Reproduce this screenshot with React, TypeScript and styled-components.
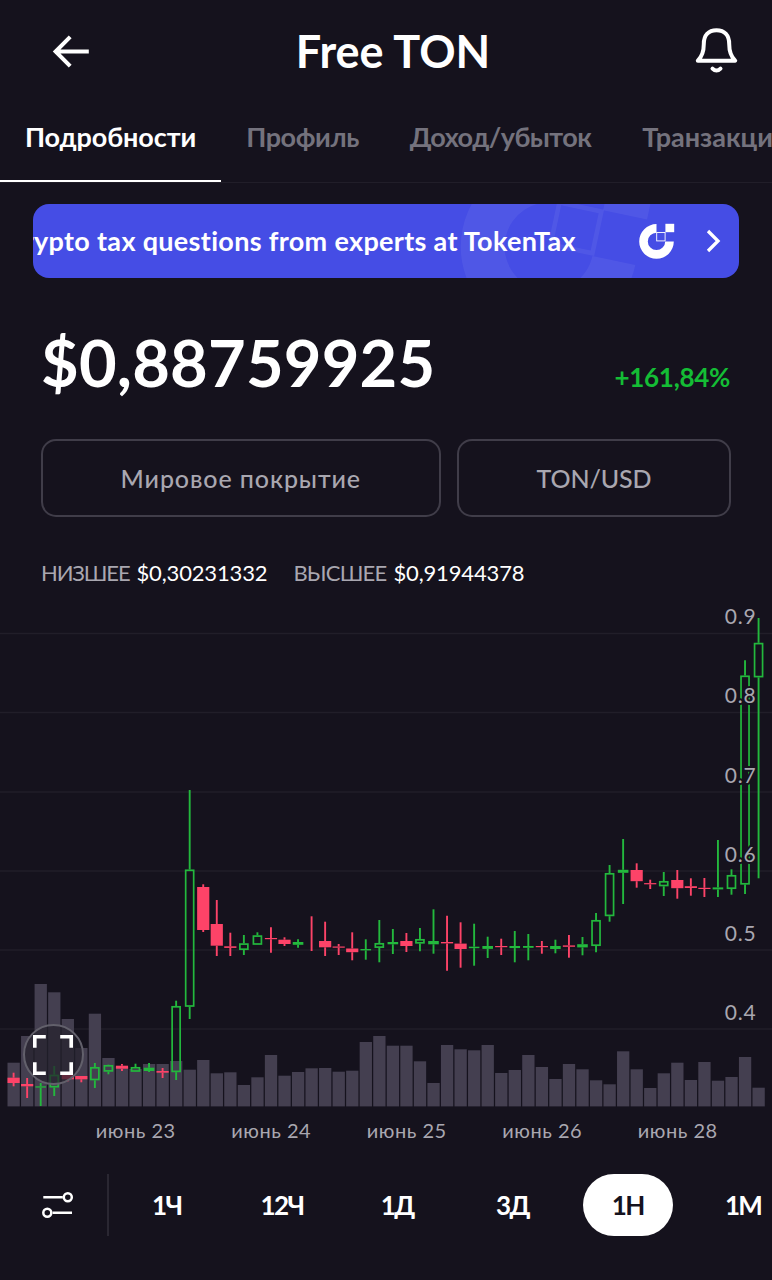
import React from "react";
import styled, { createGlobalStyle } from "styled-components";

const color = {
  bg: "#15121d",
  text: "#ffffff",
  muted: "#a9a7b0",
  dim: "#74727d",
  line: "#211e29",
  border: "#403d49",
  volume: "#443f50",
  up: "#23b83d",
  down: "#fd4368",
  banner: "#454de5",
};

const GlobalStyle = createGlobalStyle`
  * { box-sizing: border-box; }
  body {
    margin: 0;
    background: ${color.bg};
    color: ${color.text};
    font-family: Lato, "Liberation Sans", sans-serif;
    overflow: hidden;
  }
  button { font: inherit; color: inherit; background: none; border: 0; padding: 0; }
  svg { display: block; }
`;

const Screen = styled.div`
  width: 772px;
  height: 1280px;
  overflow: hidden;
  display: flex;
  flex-direction: column;
`;

const Header = styled.header`
  height: 102px;
  flex: none;
  padding: 0 33px 0 50px;
  display: grid;
  grid-template-columns: 44px 1fr 44px;
  align-items: center;
`;

const Title = styled.h1`
  margin: 0;
  padding-right: 3px;
  font-size: 45px;
  line-height: 54px;
  font-weight: 700;
  text-align: center;
`;

const IconButton = styled.button`
  width: 44px;
  height: 56px;
  display: flex;
  align-items: center;
  justify-content: center;
`;

const Tabs = styled.nav`
  height: 81px;
  flex: none;
  display: flex;
  border-bottom: 1px solid ${color.line};
  overflow: hidden;
`;

const Tab = styled.button<{ $active?: boolean; $width: number; $tracking?: number }>`
  flex: none;
  width: ${(p) => p.$width}px;
  height: 80px;
  padding: 0 0 9px;
  font-size: 27px;
  font-weight: 700;
  letter-spacing: ${(p) => p.$tracking ?? 0}px;
  white-space: nowrap;
  color: ${(p) => (p.$active ? color.text : color.dim)};
  border-bottom: 2px solid ${(p) => (p.$active ? color.text : "transparent")};
`;

const Banner = styled.div`
  position: relative;
  flex: none;
  height: 74px;
  margin: 21px 33px 0;
  border-radius: 16px;
  background: ${color.banner};
  overflow: hidden;
  display: flex;
  align-items: center;
`;

const Watermark = styled.svg`
  position: absolute;
  inset: 0;
  color: rgba(255, 255, 255, 0.06);
`;

const Ticker = styled.div`
  position: relative;
  width: 543px;
  margin-right: 62px;
  padding-bottom: 2px;
  display: flex;
  justify-content: flex-end;
  font-size: 27px;
  font-weight: 700;
  letter-spacing: 0.32px;
  white-space: nowrap;
`;

const BannerIcons = styled.div`
  position: relative;
  display: flex;
  align-items: center;
  gap: 31px;
`;

const PriceRow = styled.section`
  flex: none;
  height: 138px;
  margin: 0 42px 0 41px;
  padding-top: 46px;
  display: flex;
  align-items: baseline;
  justify-content: space-between;
`;

const Price = styled.div`
  font-size: 65px;
  line-height: 76px;
  font-weight: 700;
  letter-spacing: 0.2px;
`;

const Change = styled.div`
  font-size: 26px;
  font-weight: 700;
  letter-spacing: -0.3px;
  color: #14bd35;
`;

const Markets = styled.section`
  flex: none;
  margin: 23px 41px 0;
  display: grid;
  grid-template-columns: 399.5px 1fr;
  gap: 16.5px;
`;

const MarketButton = styled.button<{ $tracking: number }>`
  height: 78px;
  padding-bottom: 1px;
  border: 2px solid ${color.border};
  border-radius: 15px;
  font-size: 25px;
  font-weight: 500;
  letter-spacing: ${(p) => p.$tracking}px;
  color: ${color.muted};
`;

const Range = styled.section`
  flex: none;
  margin: 41px 41px 2px;
  height: 28px;
  display: flex;
  align-items: center;
  gap: 26px;
  font-size: 22px;
`;

const Stat = styled.div`
  display: flex;
  gap: 7px;
  color: ${color.muted};
`;

const StatLabel = styled.span<{ $tracking: number }>`
  letter-spacing: ${(p) => p.$tracking}px;
`;

const StatValue = styled.span`
  color: ${color.text};
  letter-spacing: -0.15px;
`;

const ChartBox = styled.section`
  position: relative;
  flex: none;
  height: 520px;
`;

const AxisText = styled.text`
  font-size: 21px;
  letter-spacing: 0.8px;
  fill: ${color.muted};
  stroke: ${color.bg};
  stroke-width: 4px;
  stroke-linejoin: round;
  paint-order: stroke;
`;

const ExpandButton = styled.button`
  position: absolute;
  left: 23px;
  top: 436px;
  width: 61px;
  height: 61px;
  border-radius: 50%;
  border: 2px solid #62606b;
  background: rgba(36, 33, 45, 0.72);
  display: flex;
  align-items: center;
  justify-content: center;
  padding: 0 1px 0 0;
`;

const Dates = styled.div`
  flex: none;
  height: 44px;
  padding-left: 68px;
  display: grid;
  grid-template-columns: repeat(5, 135.5px);
  align-items: center;
  justify-items: center;
  font-size: 20px;
  letter-spacing: 0.5px;
  color: ${color.muted};
`;

const Toolbar = styled.footer`
  flex: none;
  height: 62px;
  margin-top: 22px;
  display: flex;
`;

const Settings = styled.button`
  flex: none;
  width: 109px;
  height: 62px;
  padding-left: 9px;
  border-right: 2px solid #2a2732;
  display: flex;
  align-items: center;
  justify-content: center;
`;

const Periods = styled.div`
  flex: none;
  display: grid;
  grid-template-columns: repeat(6, 115.3px);
  justify-items: center;
`;

const Period = styled.button<{ $active?: boolean }>`
  width: 90px;
  height: 62px;
  padding-bottom: 1px;
  border-radius: 31px;
  font-size: 26px;
  font-weight: 700;
  letter-spacing: -1.6px;
  background: ${(p) => (p.$active ? color.text : "transparent")};
  color: ${(p) => (p.$active ? color.bg : color.text)};
`;

const BASE = 1106;
const TOP = 598;

const volumeTops = [
  1062.7, 1036, 984, 992.3, 1019, 1048, 1013.7, 1058, 1067, 1069, 1064, 1064, 1061, 1069.7, 1060, 1073.3,
  1072.3, 1085, 1077.3, 1055, 1075.7, 1072, 1068.3, 1068, 1071.7, 1070.7, 1042, 1036, 1045.7, 1045.7, 1061.3,
  1083, 1045, 1049.3, 1050.3, 1045, 1073, 1070, 1055, 1067, 1079, 1064, 1069.3, 1080.3, 1084.3, 1051.3, 1069.3,
  1088, 1073.3, 1062.7, 1080, 1062, 1080.7, 1077, 1057, 1087.7,
];

type Candle = ["u" | "d", number, number, number, number];

// direction, wick top, body top, body bottom, wick bottom
const candles: Candle[] = [
  ["d", 1072.7, 1077.7, 1083, 1086.3],
  ["d", 1078, 1084, 1086.3, 1098],
  ["u", 1083, 1086.3, 1087.6, 1106],
  ["u", 1066, 1074.7, 1087.5, 1096],
  ["d", 1074, 1075, 1079.3, 1081.3],
  ["d", 1076, 1076, 1079.3, 1082.3],
  ["u", 1063, 1067, 1080.3, 1088],
  ["u", 1064.7, 1065, 1071.7, 1074.3],
  ["d", 1064, 1065.7, 1068.7, 1071],
  ["u", 1063.7, 1067, 1071.8, 1071.8],
  ["u", 1063, 1067.7, 1071, 1072],
  ["d", 1068, 1071, 1072.7, 1078],
  ["u", 1000.7, 1006, 1072.2, 1080],
  ["u", 790, 869.5, 1006.8, 1019],
  ["d", 884.3, 887, 930, 932],
  ["d", 900, 924, 945.7, 956],
  ["d", 932.7, 946.3, 947.9, 956],
  ["u", 935, 943.3, 950, 955],
  ["u", 932.3, 935.3, 944.8, 944.8],
  ["d", 927.3, 938, 939.2, 952.7],
  ["d", 937.3, 939.7, 944, 946],
  ["u", 939.3, 942, 944.8, 947.7],
  ["d", 916.3, 951, 951, 951],
  ["d", 921.7, 941, 947.3, 956],
  ["d", 944, 946.5, 947.7, 955],
  ["d", 932.3, 948.5, 952.2, 960.3],
  ["u", 939.3, 949, 950.4, 959.7],
  ["u", 920, 943, 947.9, 962.3],
  ["u", 929, 942, 944.3, 954],
  ["d", 933, 941, 946, 952],
  ["u", 928, 939, 943.6, 951.3],
  ["u", 909.3, 941, 944.3, 953.7],
  ["d", 915.7, 942, 943.4, 970.7],
  ["d", 922.3, 943.6, 949, 967.7],
  ["u", 923.7, 946.7, 948.2, 965.7],
  ["u", 936.7, 946, 948.9, 958],
  ["d", 938.7, 946, 947.2, 955],
  ["u", 931, 946, 948.1, 962.3],
  ["u", 934, 946, 947.8, 960.3],
  ["d", 941, 946, 947.2, 953.7],
  ["u", 939.7, 946, 949, 953.3],
  ["d", 935, 945.4, 946.8, 957.7],
  ["u", 937, 944.2, 947.4, 955.3],
  ["u", 913, 920, 946, 952.3],
  ["u", 865, 873, 916.2, 921.7],
  ["u", 839, 869.8, 872.8, 904],
  ["d", 863.3, 870, 881.2, 887.7],
  ["d", 879.7, 883.1, 884.3, 889],
  ["u", 872, 881, 886.3, 896],
  ["d", 870, 880, 888.2, 898.7],
  ["d", 878.3, 886.2, 888, 895.7],
  ["d", 878, 887.8, 889, 897],
  ["u", 840, 887.4, 889.4, 897],
  ["u", 869.3, 875, 889, 894.7],
  ["u", 660.3, 675.5, 884.6, 894],
  ["u", 618, 642.8, 677.4, 878.3],
];

const priceLines = [
  { y: 633.5, label: "0.9" },
  { y: 712.5, label: "0.8" },
  { y: 792, label: "0.7" },
  { y: 871, label: "0.6" },
  { y: 950, label: "0.5" },
  { y: 1029, label: "0.4" },
];

const cx = (i: number) => 13.6 + 13.545 * i;

function CandleMark({ index, candle }: { index: number; candle: Candle }) {
  const [dir, high, top, bottom, low] = candle;
  const x = cx(index);
  const hollow = dir === "u" && bottom - top > 4;
  const stroke = dir === "u" ? color.up : color.down;
  const half = dir === "u" ? 5.3 : 6.1;
  return (
    <g stroke={stroke} strokeWidth={1.9}>
      {top > high && <line x1={x} x2={x} y1={high} y2={top} />}
      {low > bottom && <line x1={x} x2={x} y1={bottom} y2={low} />}
      {hollow ? (
        <rect x={x - 4} y={top + 0.8} width={8} height={bottom - top - 1.6} fill="none" strokeWidth={1.7} />
      ) : (
        <rect x={x - half} y={top} width={half * 2} height={bottom - top} fill={stroke} stroke="none" />
      )}
    </g>
  );
}

function Chart() {
  return (
    <svg width="772" height="520" viewBox={`0 ${TOP - 10} 772 520`}>
      {priceLines.map((l) => (
        <line key={l.label} x1="0" x2="772" y1={l.y} y2={l.y} stroke={color.line} strokeWidth="1.4" />
      ))}
      {volumeTops.map((y, i) => (
        <rect key={i} x={cx(i) - 6.1} y={y} width="12.3" height={BASE + 0.4 - y} fill={color.volume} />
      ))}
      {candles.map((c, i) => (
        <CandleMark key={i} index={i} candle={c} />
      ))}
      {priceLines.map((l) => (
        <AxisText key={l.label} x="756.5" y={l.y - 9.5} textAnchor="end">
          {l.label}
        </AxisText>
      ))}
    </svg>
  );
}

function TokenMark() {
  return (
    <g>
      <path
        d="M0 -17.3A17.3 17.3 0 1 0 17.3 0H8.7A8.7 8.7 0 1 1 0 -8.7Z"
        fill="currentColor"
      />
      <rect x="8.9" y="-17.6" width="8.8" height="8.4" fill="currentColor" />
      <rect x="0.2" y="-8.9" width="8.4" height="8.4" fill="none" stroke="currentColor" strokeWidth="0.9" />
    </g>
  );
}

const periods = ["1Ч", "12Ч", "1Д", "3Д", "1Н", "1М"];

export default function App() {
  return (
    <Screen>
      <GlobalStyle />
      <Header>
        <IconButton aria-label="Назад">
          <svg width="44" height="40" viewBox="0 0 44 40" fill="none" stroke="#fff" strokeWidth="4">
            <path d="M20.2 5.8 5.6 20.5 20.2 35.2M6 20.5H38.8" />
          </svg>
        </IconButton>
        <Title>Free TON</Title>
        <IconButton aria-label="Уведомления">
          <svg width="44" height="50" viewBox="0 0 44 50" fill="none" stroke="#fff" strokeWidth="4" strokeLinecap="round" strokeLinejoin="round">
            <path d="M2.8 34.7C7.2 30.5 8.8 25 8.8 18 8.8 9.5 13.3 4.2 21.5 4.2S34.2 9.5 34.2 18C34.2 25 35.8 30.5 40.2 34.7Z" />
            <path d="M17.5 42.6Q21.5 46.6 25.5 42.6" />
          </svg>
        </IconButton>
      </Header>

      <Tabs>
        <Tab $active $width={221} $tracking={-0.1}>Подробности</Tab>
        <Tab $width={163} $tracking={-0.4}>Профиль</Tab>
        <Tab $width={233} $tracking={-0.55}>Доход/убыток</Tab>
        <Tab $width={197}>Транзакции</Tab>
      </Tabs>

      <Banner>
        <Watermark width="706" height="74" viewBox="33 204 706 74">
          <g transform="translate(549 246.7) rotate(12) scale(5.1)">
            <TokenMark />
          </g>
        </Watermark>
        <Ticker>Ask your crypto tax questions from experts at TokenTax</Ticker>
        <BannerIcons>
          <svg width="37" height="37" viewBox="-18.5 -18.4 37 37">
            <TokenMark />
          </svg>
          <svg width="16" height="26" viewBox="0 0 16 26" fill="none" stroke="#fff" strokeWidth="3.3">
            <path d="M2 3 12 13 2 23" />
          </svg>
        </BannerIcons>
      </Banner>

      <PriceRow>
        <Price>$0,88759925</Price>
        <Change>+161,84%</Change>
      </PriceRow>

      <Markets>
        <MarketButton $tracking={0.9}>Мировое покрытие</MarketButton>
        <MarketButton $tracking={-0.1}>TON/USD</MarketButton>
      </Markets>

      <Range>
        <Stat>
          <StatLabel $tracking={-1.15}>НИЗШЕЕ</StatLabel>
          <StatValue>$0,30231332</StatValue>
        </Stat>
        <Stat>
          <StatLabel $tracking={-0.8}>ВЫСШЕЕ</StatLabel>
          <StatValue>$0,91944378</StatValue>
        </Stat>
      </Range>

      <ChartBox>
        <Chart />
        <ExpandButton aria-label="Развернуть">
          <svg width="40" height="40" viewBox="0 0 40 40" fill="none" stroke="#fff" strokeWidth="3.6">
            <path d="M1.8 12.8V1.8H12.8M27.2 1.8H38.2V12.8M38.2 27.2V38.2H27.2M12.8 38.2H1.8V27.2" />
          </svg>
        </ExpandButton>
      </ChartBox>

      <Dates>
        {[23, 24, 25, 26, 28].map((d) => (
          <span key={d}>июнь {d}</span>
        ))}
      </Dates>

      <Toolbar>
        <Settings aria-label="Настройки">
          <svg width="32" height="28" viewBox="0 0 32 28" fill="none" stroke="#fff" strokeWidth="2.5">
            <path d="M1.3 6.2H20.8M10.6 21.8H30" />
            <circle cx="25.8" cy="6.2" r="4" />
            <circle cx="5.3" cy="21.8" r="4" />
          </svg>
        </Settings>
        <Periods>
          {periods.map((p) => (
            <Period key={p} $active={p === "1Н"}>
              {p}
            </Period>
          ))}
        </Periods>
      </Toolbar>
    </Screen>
  );
}
